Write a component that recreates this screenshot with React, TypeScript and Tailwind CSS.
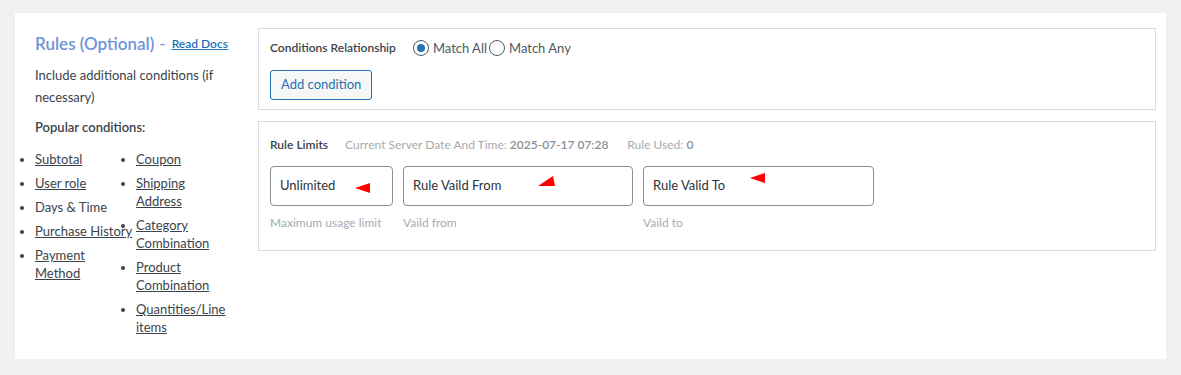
import React from 'react';

const font = { fontFamily: '"Segoe UI", Lato, "Liberation Sans", sans-serif' };

function Marker({ kind }: { kind: 'left' | 'corner' }) {
  if (kind === 'corner') {
    return (
      <svg width="18" height="11" viewBox="0 0 18 11" className="absolute">
        <polygon points="15,0 17,10 0,10" fill="#ff0000" />
      </svg>
    );
  }
  return (
    <svg width="16" height="11" viewBox="0 0 16 11" className="absolute">
      <polygon points="0,5 15,0 15,10" fill="#ff0000" />
    </svg>
  );
}

function Radio({ checked, label }: { checked?: boolean; label: string }) {
  return (
    <label className="flex items-center gap-[4px]">
      <span className="flex h-[16px] w-[16px] items-center justify-center rounded-full border border-[#50575e] bg-white">
        {checked && <span className="h-[8px] w-[8px] rounded-full bg-[#2271b1]" />}
      </span>
      <span className="text-[13px] text-[#50575e]">{label}</span>
    </label>
  );
}

export default function App() {
  const col1 = [
    { text: 'Subtotal', link: true },
    { text: 'User role', link: true },
    { text: 'Days & Time', link: false },
    { text: 'Purchase History', link: true, nowrap: true },
    { text: 'Payment Method', link: true },
  ];
  const col2 = [
    { text: 'Coupon', link: true },
    { text: 'Shipping Address', link: true },
    { text: 'Category Combination', link: true },
    { text: 'Product Combination', link: true },
    { text: 'Quantities/Line items', link: true },
  ];

  return (
    <div className="min-h-screen bg-[#f0f0f1] pt-[13px] pl-[15px] pr-[15px]" style={font}>
      <div className="flex h-[346px] bg-white text-[#3c434a]">
        {/* left column */}
        <div className="w-[243px] shrink-0 pl-[20px] pt-[19px]">
          <div className="flex items-center leading-[24px]">
            <span className="text-[17px] font-semibold text-[#6f93da]">Rules (Optional)</span>
            <span className="ml-[5px] text-[17px] text-[#6f93da]">-</span>
            <a className="ml-[6px] text-[12px] font-semibold text-[#2271b1] underline">Read Docs</a>
          </div>
          <p className="mt-[8px] w-[200px] text-[13px] leading-[22px]">
            Include additional conditions (if necessary)
          </p>
          <p className="mt-[8px] text-[13px] font-semibold leading-[22px]">Popular conditions:</p>
          <div className="-ml-[14px] mt-[12px] flex text-[13px] leading-[18px]">
            <ul className="w-[101px] list-disc pl-[14px]">
              {col1.map((it) => (
                <li key={it.text} className={it.nowrap ? 'mb-[6px] whitespace-nowrap' : 'mb-[6px] w-[82px]'}>
                  <span className={it.link ? 'underline' : ''}>{it.text}</span>
                </li>
              ))}
            </ul>
            <ul className="w-[101px] list-disc pl-[14px]">
              {col2.map((it) => (
                <li key={it.text} className="mb-[6px] w-[87px]">
                  <span className={it.link ? 'underline' : ''}>{it.text}</span>
                </li>
              ))}
            </ul>
          </div>
        </div>

        {/* right column */}
        <div className="flex-1 pt-[15px] pr-[10px]">
          <div className="border border-[#dcdcde] px-[11px] pt-[9px] pb-[9px]">
            <div className="flex items-center leading-[20px]">
              <span className="text-[12px] font-semibold text-[#3c434a]">Conditions Relationship</span>
              <div className="ml-[17px] flex items-center gap-[2px]">
                <Radio checked label="Match All" />
                <Radio label="Match Any" />
              </div>
            </div>
            <button className="mt-[12px] h-[30px] rounded-[3px] border border-[#2271b1] bg-[#f6f7f7] px-[10px] text-[13px] text-[#2271b1]">
              Add condition
            </button>
          </div>

          <div className="mt-[11px] border border-[#dcdcde] px-[11px] pt-[13px] pb-[17px]">
            <div className="flex items-center text-[12px] leading-[20px]">
              <span className="font-semibold text-[#3c434a]">Rule Limits</span>
              <span className="ml-[17px] text-[#a7aaad]">
                Current Server Date And Time: <span className="font-semibold text-[#8c8f94]">2025-07-17 07:28</span>
              </span>
              <span className="ml-[19px] text-[#a7aaad]">
                Rule Used: <span className="font-semibold text-[#8c8f94]">0</span>
              </span>
            </div>
            <div className="mt-[11px] flex gap-[10px]">
              <div className="w-[123px]">
                <div className="relative flex h-[40px] items-center rounded-[4px] border border-[#8c8f94] px-[9px] text-[13px] text-[#2c3338]">
                  Unlimited
                  <span className="absolute left-[84px] top-[16px]">
                    <Marker kind="left" />
                  </span>
                </div>
                <div className="mt-[7px] text-[12px] leading-[20px] text-[#a7aaad]">Maximum usage limit</div>
              </div>
              <div className="w-[230px]">
                <div className="relative flex h-[40px] items-center rounded-[4px] border border-[#8c8f94] px-[9px] text-[13px] text-[#2c3338]">
                  Rule Vaild From
                  <span className="absolute left-[134px] top-[9px]">
                    <Marker kind="corner" />
                  </span>
                </div>
                <div className="mt-[7px] text-[12px] leading-[20px] text-[#a7aaad]">Vaild from</div>
              </div>
              <div className="w-[231px]">
                <div className="relative flex h-[40px] items-center rounded-[4px] border border-[#8c8f94] px-[9px] text-[13px] text-[#2c3338]">
                  Rule Valid To
                  <span className="absolute left-[106px] top-[6px]">
                    <Marker kind="left" />
                  </span>
                </div>
                <div className="mt-[7px] text-[12px] leading-[20px] text-[#a7aaad]">Vaild to</div>
              </div>
            </div>
          </div>
        </div>
      </div>
    </div>
  );
}
